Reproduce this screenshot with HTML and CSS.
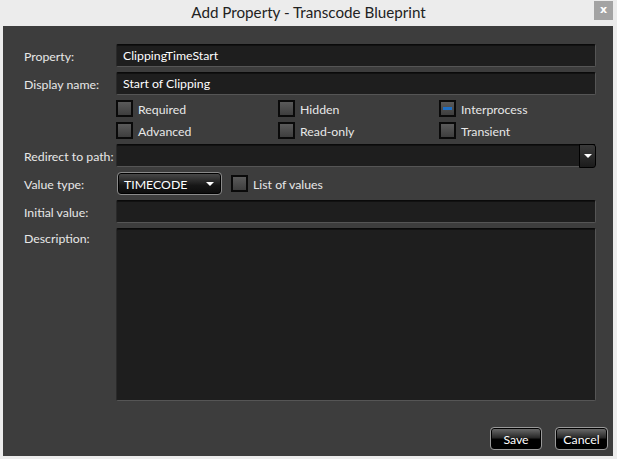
FILE: index.html
```html
<!DOCTYPE html>
<html>
<head>
<meta charset="utf-8">
<link rel="stylesheet" href="styles.css">
</head>
<body>
<div class="window">
  <div class="titlebar">
    <span></span>
    <div class="title">Add Property - Transcode Blueprint</div>
    <div class="close">x</div>
  </div>
  <div class="panel">
    <div class="form">
      <label class="lbl">Property:</label>
      <div class="input">ClippingTimeStart</div>

      <label class="lbl">Display name:</label>
      <div class="input">Start of Clipping</div>

      <span></span>
      <div class="checks">
        <div class="check"><span class="box"></span><span class="ct">Required</span></div>
        <div class="check"><span class="box"></span><span class="ct">Hidden</span></div>
        <div class="check"><span class="box partial"></span><span class="ct">Interprocess</span></div>
      </div>

      <span></span>
      <div class="checks">
        <div class="check"><span class="box"></span><span class="ct">Advanced</span></div>
        <div class="check"><span class="box"></span><span class="ct">Read-only</span></div>
        <div class="check"><span class="box"></span><span class="ct">Transient</span></div>
      </div>

      <label class="lbl">Redirect to path:</label>
      <div class="input combo-input">
        <span class="grow"></span>
        <span class="drop-btn"><span class="tri"></span></span>
      </div>

      <label class="lbl">Value type:</label>
      <div class="valrow">
        <div class="combo">TIMECODE<span class="tri"></span></div>
        <div class="check"><span class="box"></span><span class="ct">List of values</span></div>
      </div>

      <label class="lbl">Initial value:</label>
      <div class="input"></div>

      <label class="lbl lbl-top">Description:</label>
      <div class="input textarea"></div>
    </div>
    <div class="footer">
      <button class="btn save">Save</button>
      <button class="btn cancel">Cancel</button>
    </div>
  </div>
</div>
</body>
</html>
```

FILE: styles.css
```css
html, body {
  margin: 0;
  padding: 0;
  background: #ececec;
}
body {
  width: 617px;
  height: 459px;
  overflow: hidden;
  font-family: "Lato", "Open Sans", sans-serif;
}
.window {
  width: 617px;
  height: 459px;
}
.titlebar {
  height: 26px;
  display: grid;
  grid-template-columns: 1fr auto 1fr;
  align-items: start;
}
.title {
  font-size: 15.2px;
  color: #222;
  line-height: 25px;
}
.close {
  justify-self: end;
  margin: 1px 4px 0 0;
  width: 19px;
  height: 19px;
  background: #a3a3a3;
  color: #fff;
  font-size: 11px;
  font-weight: bold;
  text-align: center;
  line-height: 18px;
  font-family: "DejaVu Sans", sans-serif;
}
.panel {
  margin: 0 4px 0 3px;
  height: 430px;
  box-sizing: border-box;
  background: #3d3d3d;
  padding: 18px 5px 0 21px;
  display: flex;
  flex-direction: column;
}
.form {
  display: grid;
  grid-template-columns: 92px 480px;
  grid-template-rows: 23px 23px 17px 17px 23px 23px 23px 173px;
  row-gap: 5px;
}
.lbl {
  color: #e8e8e8;
  font-size: 12.3px;
  align-self: center;
  white-space: nowrap;
  padding-top: 1px;
}
.lbl-top {
  align-self: start;
  padding-top: 3px;
}
.input {
  box-sizing: border-box;
  background: #1e1e1e;
  border: 1px solid #555;
  border-top-color: #0a0a0a;
  border-left-color: #2a2a2a;
  border-radius: 2px;
  color: #fff;
  font-size: 12.3px;
  line-height: 22px;
  padding-left: 6px;
  box-shadow: inset 0 1px 0 #111;
}
.combo-input {
  display: flex;
  padding: 0;
  overflow: visible;
}
.grow { flex: 1; }
.drop-btn {
  width: 17px;
  margin: -1px -1px 0 0;
  height: 24px;
  box-sizing: border-box;
  border: 1px solid #000;
  border-radius: 0 3px 3px 0;
  background: linear-gradient(#3a3a3a, #1b1b1b);
  display: flex;
  align-items: center;
  justify-content: center;
}
.tri {
  width: 0;
  height: 0;
  border-left: 4px solid transparent;
  border-right: 4px solid transparent;
  border-top: 4px solid #fff;
}
.checks {
  display: grid;
  grid-template-columns: 162px 161px 1fr;
}
.check {
  display: flex;
  align-items: center;
  color: #e8e8e8;
  font-size: 12.3px;
  gap: 5px;
}
.ct {
  padding-top: 2px;
}
.box {
  width: 17px;
  height: 17px;
  box-sizing: border-box;
  border: 2px solid #0a0a0a;
  background: linear-gradient(#5a5a5a, #3e3e3e);
  display: flex;
  align-items: center;
  justify-content: center;
  flex: none;
}
.partial::after {
  content: "";
  width: 9px;
  height: 3px;
  background: #1f6fc4;
}
.valrow {
  display: flex;
  align-items: center;
  gap: 9px;
}
.combo {
  box-sizing: border-box;
  width: 105px;
  height: 23px;
  margin-left: 1px;
  border: 1px solid #8a8a8a;
  border-radius: 4px;
  box-shadow: inset 0 0 0 1px #000;
  background: linear-gradient(#4c4c4c, #161616 60%, #0c0c0c);
  color: #fff;
  font-size: 12.3px;
  display: flex;
  align-items: center;
  justify-content: space-between;
  padding: 1px 7px 0 6px;
}
.textarea {
  height: 173px;
}
.footer {
  display: flex;
  justify-content: flex-end;
  gap: 13px;
  margin-top: 26px;
}
.btn {
  box-sizing: border-box;
  height: 23px;
  border: 1px solid #9a9a9a;
  border-radius: 4px;
  box-shadow: inset 0 0 0 1px #000;
  background: linear-gradient(#707070, #2a2a2a 45%, #000 55%, #000);
  color: #fff;
  font-family: "Lato", "Open Sans", sans-serif;
  font-size: 12.3px;
  padding: 1px 0 0;
}
.save { width: 52px; }
.cancel { width: 53px; }
```
